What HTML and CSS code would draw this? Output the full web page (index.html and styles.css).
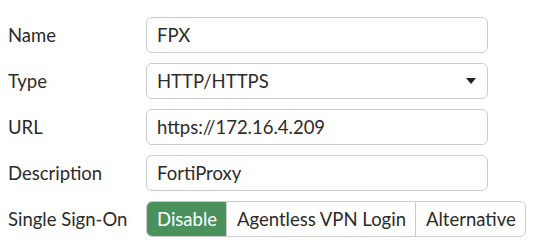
FILE: index.html
```html
<!DOCTYPE html>
<html>
<head>
<meta charset="utf-8">
<link rel="stylesheet" href="styles.css">
</head>
<body>
<div class="form">
  <div class="row">
    <label class="label">Name</label>
    <div class="field">FPX</div>
  </div>
  <div class="row">
    <label class="label">Type</label>
    <div class="field select">HTTP/HTTPS<span class="caret"></span></div>
  </div>
  <div class="row">
    <label class="label">URL</label>
    <div class="field">https://172.16.4.209</div>
  </div>
  <div class="row">
    <label class="label">Description</label>
    <div class="field">FortiProxy</div>
  </div>
  <div class="row">
    <label class="label">Single Sign-On</label>
    <div class="toggle">
      <span class="opt active">Disable</span>
      <span class="opt">Agentless VPN Login</span>
      <span class="opt">Alternative</span>
    </div>
  </div>
</div>
</body>
</html>
```
FILE: styles.css
```css
html, body {
  margin: 0;
  background: #fff;
}
body {
  padding: 17px 0 0 8px;
  font-family: Lato, "Open Sans", sans-serif;
  font-size: 18.5px;
  color: #2b2b2b;
}
.form {
  display: flex;
  flex-direction: column;
  gap: 10px;
}
.row {
  display: flex;
  align-items: center;
  height: 36px;
}
.label {
  width: 138px;
  flex: none;
}
.field {
  box-sizing: border-box;
  width: 342px;
  height: 36px;
  border: 1px solid #ccc;
  border-radius: 6px;
  padding: 0 10px;
  display: flex;
  align-items: center;
}
.select {
  justify-content: space-between;
}
.caret {
  width: 0;
  height: 0;
  border-left: 5px solid transparent;
  border-right: 5px solid transparent;
  border-top: 6px solid #222;
  margin-right: 1px;
}
.toggle {
  display: flex;
  height: 36px;
  border: 1px solid #ccc;
  border-radius: 6px;
  box-sizing: border-box;
  overflow: hidden;
}
.opt {
  display: flex;
  align-items: center;
  padding: 0 9px 0 10px;
  border-left: 1px solid #ccc;
}
.opt:first-child {
  border-left: none;
}
.opt.active {
  background: #4a915c;
  color: #fff;
}
```
